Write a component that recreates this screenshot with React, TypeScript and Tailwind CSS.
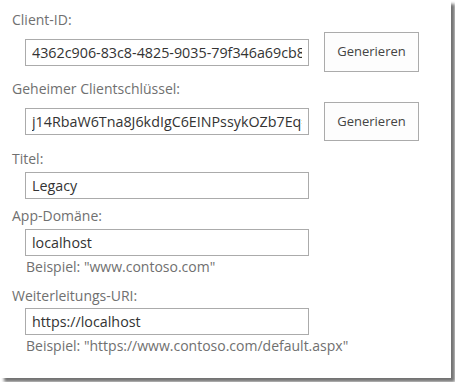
import { ReactNode } from "react";

function Label({ children, className = "" }: { children: ReactNode; className?: string }) {
  return <div className={"pl-[12px] text-[14px] leading-[19px] text-[#707070] " + className}>{children}</div>;
}

function Field({ value, className = "" }: { value: string; className?: string }) {
  return (
    <input
      readOnly
      value={value}
      className={"block w-[284px] h-[27px] border border-[#ababab] bg-white px-[6px] text-[14.3px] text-[#333] outline-none " + className}
    />
  );
}

function Hint({ children, className = "" }: { children: ReactNode; className?: string }) {
  return <div className={"pl-[26px] text-[14px] leading-[19px] text-[#707070] " + className}>{children}</div>;
}

export default function App() {
  return (
    <div className="w-[455px] h-[382px] bg-white" style={{ fontFamily: '"Open Sans", "Noto Sans", sans-serif' }}>
      <div className="w-[451px] h-[378px] bg-white shadow-[4px_4px_3px_rgba(0,0,0,0.55)] pt-[10px]">
        <Label>Client-ID:</Label>
        <div className="mt-[3px] flex items-center pl-[25px]">
          <Field value="4362c906-83c8-4825-9035-79f346a69cb8" />
          <button className="ml-[15px] w-[95px] h-[40px] border border-[#ababab] bg-[#fdfdfd] text-[13px] text-[#444]">Generieren</button>
        </div>

        <Label className="mt-[7px]">Geheimer Clientschlüssel:</Label>
        <div className="mt-[4px] flex items-center pl-[25px]">
          <Field value="j14RbaW6Tna8J6kdIgC6EINPssykOZb7Eq=" />
          <button className="ml-[15px] w-[95px] h-[39px] border border-[#ababab] bg-[#fdfdfd] text-[13px] text-[#444]">Generieren</button>
        </div>

        <Label className="mt-[8px]">Titel:</Label>
        <div className="mt-[4px] pl-[25px]">
          <Field value="Legacy" />
        </div>

        <Label className="mt-[7px]">App-Domäne:</Label>
        <div className="mt-[4px] pl-[25px]">
          <Field value="localhost" />
        </div>
        <Hint className="mt-[1px]">Beispiel: "www.contoso.com"</Hint>

        <Label className="mt-[10px]">Weiterleitungs-URI:</Label>
        <div className="mt-[3px] pl-[25px]">
          <Field value="https://localhost" />
        </div>
        <Hint className="mt-[1px]">Beispiel: "https://www.contoso.com/default.aspx"</Hint>
      </div>
    </div>
  );
}
